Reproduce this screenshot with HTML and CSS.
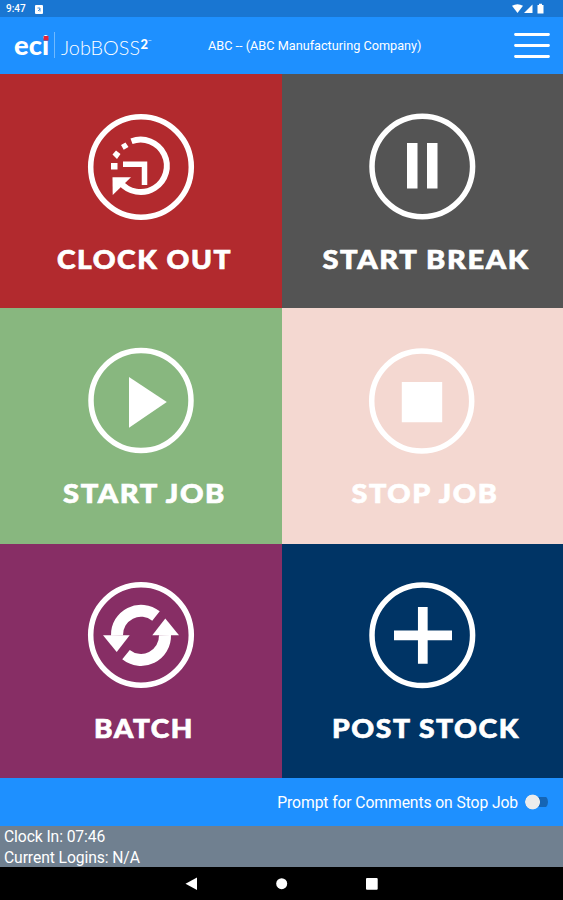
FILE: index.html
```
<!DOCTYPE html>
<html lang="en">
<head>
<meta charset="utf-8">
<title>JobBOSS2</title>
<link rel="stylesheet" href="styles.css">
</head>
<body>
<div class="status">
  <span class="time">9:47</span>
  <svg class="note" width="8" height="9" viewBox="0 0 8 9"><rect width="8" height="9" rx="1" fill="#fff"/><path d="M2.500 3h2.500v3.500M3 6l2-2" fill="none" stroke="#1976d2" stroke-width=".8"/></svg>
  <svg class="signals" width="34" height="12" viewBox="0 0 34 12" fill="#fff"><path d="M0 2.800Q5.500 -.5 11 2.800L5.500 10z"/><path d="M12 10L20.500 1.500V10z"/><path d="M25.500 2h1.500V.8h3V2h1.500v8.500h-6z"/></svg>
</div>
<header class="header">
  <svg class="logo" width="150" height="56" viewBox="0 0 150 56">
    <text class="eci" x="14" y="38" textLength="35" lengthAdjust="spacingAndGlyphs">eci</text>
    <rect x="43.500" y="19" width="5" height="4.500" fill="#e5243b"/>
    <path d="M54.500 15V41" stroke="#6fb9ff" stroke-width="1"/>
    <text class="boss" x="61" y="38" textLength="79" lengthAdjust="spacingAndGlyphs">JobBOSS</text>
    <text class="two" x="140.500" y="32" textLength="7.500" lengthAdjust="spacingAndGlyphs">2</text>
    <path d="M148.500 23.500h3" stroke="#a9d4ff" stroke-width=".8"/>
  </svg>
  <div class="company">ABC -- (ABC Manufacturing Company)</div>
  <svg class="menu" width="36" height="28" viewBox="0 0 36 28"><path d="M1.500 2.500h33M1.500 13.500h33M1.500 24.500h33" stroke="#fff" stroke-width="2.800" stroke-linecap="round"/></svg>
</header>
<main class="tiles">
  <svg class="tile out" viewBox="0 74 282 234">
    <circle class="ring" cx="141" cy="167" r="50.300"/>
    <path class="line" stroke-width="6" d="M131.500 141.300A26.200 26.200 0 1 1 120 182"/>
    <path d="M112.500 177.200H131L112.700 195z"/>
    <path class="line" stroke-width="5.500" d="M123 164.300H144.500V185"/>
    <path d="M111 163h6.500v6.500h-6.500zM112.500 154.500L116 150.500L120.500 154L117 159zM121 145L125.500 142.500L128.500 147L123.700 149.700z"/>
    <text x="57" y="269" textLength="175" lengthAdjust="spacingAndGlyphs">CLOCK OUT</text>
  </svg>
  <svg class="tile pause" viewBox="282 74 281 234">
    <circle class="ring" cx="422.300" cy="166.500" r="50.300"/>
    <path d="M407 143h10.500v45.500H407zM427 143h10.500v45.500H427z"/>
    <text x="322.500" y="269" textLength="207" lengthAdjust="spacingAndGlyphs">START BREAK</text>
  </svg>
  <svg class="tile start" viewBox="0 308 282 236">
    <circle class="ring" cx="141" cy="400.500" r="50"/>
    <path d="M129 377L166.800 402L129 427.800z"/>
    <text x="63" y="502.500" textLength="163" lengthAdjust="spacingAndGlyphs">START JOB</text>
  </svg>
  <svg class="tile stop" viewBox="282 308 281 236">
    <circle class="ring" cx="421.700" cy="401" r="50"/>
    <path d="M401.800 382h40.400v40.200h-40.400z"/>
    <text x="351.500" y="503.300" textLength="147" lengthAdjust="spacingAndGlyphs">STOP JOB</text>
  </svg>
  <svg class="tile batch" viewBox="0 544 282 234">
    <circle class="ring" cx="141" cy="635" r="50.300"/>
    <g id="half"><path class="line" stroke-width="12" d="M156 616A24 24 0 0 0 117 635.500"/><path d="M103 635.300H129.700L116.700 652z"/></g>
    <use href="#half" transform="rotate(180 141 635.300)"/>
    <text x="94" y="737.500" textLength="100" lengthAdjust="spacingAndGlyphs">BATCH</text>
  </svg>
  <svg class="tile stock" viewBox="282 544 281 234">
    <circle class="ring" cx="422.300" cy="635.300" r="50.300"/>
    <path class="line" stroke-width="9.700" d="M394 635.300H452M422.800 607V663.700"/>
    <text x="332" y="738" textLength="188" lengthAdjust="spacingAndGlyphs">POST STOCK</text>
  </svg>
</main>
<div class="prompt"><span>Prompt for Comments on Stop Job</span><span class="switch"></span></div>
<div class="info"><div>Clock In: 07:46</div><div>Current Logins: N/A</div></div>
<nav class="nav">
  <svg width="563" height="33" viewBox="0 867 563 33" fill="#fff"><path d="M185.500 883.700L197 877.500V890z"/><circle cx="281.700" cy="883.700" r="5.500"/><rect x="366" y="878" width="11.700" height="11.700" rx="1"/></svg>
</nav>
</body>
</html>
```
FILE: styles.css
```
* { box-sizing: border-box; }
body {
  margin: 0;
  width: 563px;
  height: 900px;
  display: flex;
  flex-direction: column;
  overflow: hidden;
  font-family: Roboto, "Liberation Sans", sans-serif;
  color: #fff;
}
svg { display: block; flex: none; }
.status {
  height: 17px;
  background: #1976d2;
  display: flex;
  align-items: center;
  padding: 1px 17px 0 6px;
}
.time { width: 29px; font-size: 10px; font-weight: 500; line-height: 12px; }
.signals { margin-left: auto; }
.header {
  height: 57px;
  background: #1e90ff;
  display: flex;
  align-items: center;
  padding-right: 13px;
}
.logo { margin-top: -1px; overflow: visible; }
.logo text { fill: #fff; }
.logo .eci { font: 900 27px Lato, sans-serif; }
.logo .boss { font: 300 20px Lato, sans-serif; }
.logo .two { font: 900 13px Lato, sans-serif; }
.company {
  margin-left: 58px;
  font-size: 12.700px;
  white-space: nowrap;
}
.menu { margin-left: auto; }
.tiles {
  display: grid;
  grid-template-columns: 282px 281px;
  grid-template-rows: 234px 236px 234px;
}
.tile { width: 100%; height: 100%; fill: #fff; }
.tile text {
  font: 900 27px Lato, sans-serif;
  letter-spacing: 1.500px;
  stroke: #fff;
  stroke-width: .7;
}
.ring { fill: none; stroke: #fff; stroke-width: 5.500; }
.line { fill: none; stroke: #fff; }
.out { background: #b22a2e; }
.pause { background: #545454; }
.start { background: #88b77f; }
.stop { background: #f4d8d1; }
.batch { background: #872e65; }
.stock { background: #003465; }
.prompt {
  height: 48px;
  background: #1e90ff;
  display: flex;
  align-items: center;
  justify-content: flex-end;
  padding-right: 15px;
  gap: 7px;
  font-size: 15.700px;
  letter-spacing: -.1px;
}
.switch {
  width: 23px;
  height: 16px;
  background:
    radial-gradient(circle at 7.500px 8px, #ececec 7px, transparent 7.800px),
    linear-gradient(#1565b5, #1565b5) 8px 3px / 15px 10px no-repeat;
  border-radius: 8px;
}
.info {
  height: 41px;
  background: #708090;
  padding: 1px 4px;
  font-size: 15.700px;
  letter-spacing: -.1px;
  line-height: 20.500px;
}
.nav { height: 33px; background: #000; }
```
